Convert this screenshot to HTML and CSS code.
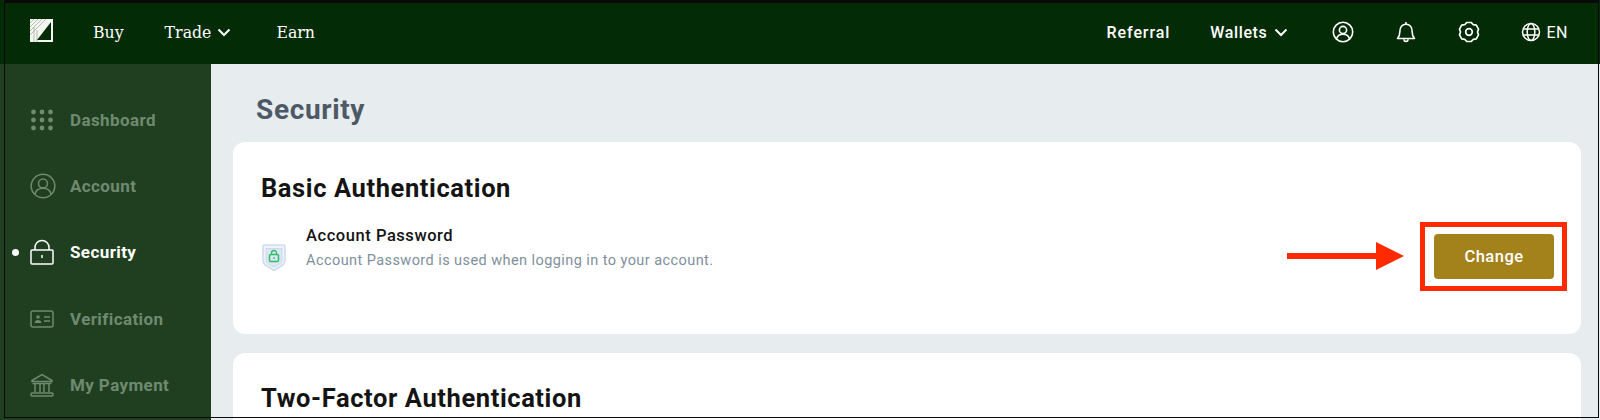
FILE: index.html
```html
<!DOCTYPE html>
<html lang="en">
<head>
<meta charset="utf-8">
<title>Security</title>
<link rel="stylesheet" href="styles.css">
</head>
<body>
<div class="page">
  <header class="topbar">
    <svg class="logo" viewBox="0 0 23 23" width="23" height="23">
      <rect width="23" height="23" fill="#f4f6f2"/>
      <path d="M0 4L4 0M0 8L8 0M0 12L12 0M0 16L16 0M4 23V8M7 23V11" stroke="#9aa79a" stroke-width=".7" fill="none"/>
      <path d="M21 3V21H7Z" fill="#032b05"/>
    </svg>
    <nav class="nav-left">
      <a class="nav-serif nav-buy">Buy</a>
      <a class="nav-serif nav-trade">Trade
        <svg class="chev" viewBox="0 0 14 9" width="14" height="9"><path d="M1.5 1.5L7 7L12.5 1.5" stroke="#fff" stroke-width="2" fill="none"/></svg>
      </a>
      <a class="nav-serif nav-earn">Earn</a>
    </nav>
    <nav class="nav-right">
      <a class="nav-sans nav-ref">Referral</a>
      <a class="nav-sans nav-wal">Wallets
        <svg class="chev" viewBox="0 0 14 9" width="14" height="9"><path d="M1.5 1.5L7 7L12.5 1.5" stroke="#fff" stroke-width="2" fill="none"/></svg>
      </a>
      <svg class="ticon i-user" viewBox="0 0 22 22" width="22" height="22" fill="none" stroke="#fff" stroke-width="1.6"><circle cx="11" cy="11" r="9.7"/><circle cx="11" cy="9" r="3.6"/><path d="M4.5 18c.8-3.2 3.4-4.700 6.500-4.700s5.700 1.500 6.500 4.700"/></svg>
      <svg class="ticon i-bell" viewBox="0 0 22 22" width="22" height="22" fill="none" stroke="#fff" stroke-width="1.6"><path d="M2.500 17.500c1.600-1.800 2.400-3.200 2.400-7 0-4.200 2.200-7.300 6.100-7.300s6.100 3.100 6.100 7.300c0 3.800.8 5.200 2.400 7z" stroke-linejoin="round"/><path d="M11 1v2.200"/><path d="M9 18.300c0 1.300.9 2.200 2 2.200s2-.9 2-2.200"/></svg>
      <svg class="ticon i-gear" viewBox="0 0 22 22" width="22" height="22" fill="none" stroke="#fff" stroke-width="1.7"><path d="M8.700 1.500H13.300L15.300 3.700L18.300 4.200L20.500 8.100L19.500 11L20.500 13.900L18.300 17.800L15.300 18.300L13.300 20.500H8.700L6.700 18.300L3.700 17.800L1.500 13.900L2.500 11L1.500 8.100L3.700 4.200L6.700 3.700Z" stroke-linejoin="round"/><circle cx="11" cy="11" r="3.300"/></svg>
      <span class="lang">
        <svg viewBox="0 0 20 20" width="20" height="20" fill="none" stroke="#fff" stroke-width="1.500"><circle cx="10" cy="10" r="8.500"/><ellipse cx="10" cy="10" rx="3.800" ry="8.500"/><path d="M2 7h16M2 13h16"/></svg>
        <span>EN</span>
      </span>
    </nav>
  </header>
  <div class="body">
    <aside class="sidebar">
      <a class="side-item">
        <svg viewBox="0 0 24 24" width="24" height="24" fill="#6f8a70"><circle cx="3.500" cy="4" r="2.400"/><circle cx="12" cy="4" r="2.400"/><circle cx="20.500" cy="4" r="2.400"/><circle cx="3.500" cy="12" r="2.400"/><circle cx="12" cy="12" r="2.400"/><circle cx="20.500" cy="12" r="2.400"/><circle cx="3.500" cy="20" r="2.400"/><circle cx="12" cy="20" r="2.400"/><circle cx="20.500" cy="20" r="2.400"/></svg>
        <span>Dashboard</span>
      </a>
      <a class="side-item">
        <svg viewBox="0 0 26 26" width="26" height="26" fill="none" stroke="#6f8a70" stroke-width="1.500"><circle cx="13" cy="13" r="11.800"/><circle cx="13" cy="10.500" r="4.500"/><path d="M5 21c1-4 4.200-5.800 8-5.800s7 1.800 8 5.800"/></svg>
        <span>Account</span>
      </a>
      <a class="side-item active">
        <i class="dot"></i>
        <svg viewBox="0 0 24 26" width="24" height="26" fill="none" stroke="#fff" stroke-width="1.500"><rect x="1" y="11" width="22" height="14" rx="1"/><path d="M5 11V8.500a7 7 0 0 1 14 0V11"/><path d="M12 16v3"/></svg>
        <span>Security</span>
      </a>
      <a class="side-item">
        <svg viewBox="0 0 24 18" width="24" height="18" fill="none" stroke="#6f8a70" stroke-width="1.500"><rect x="1" y="1" width="22" height="16" rx="2"/><circle cx="8" cy="7" r="1.800" fill="#6f8a70" stroke="none"/><path d="M4.500 13c.4-2.200 1.700-3 3.500-3s3.100.8 3.500 3z" fill="#6f8a70" stroke="none"/><path d="M14 7h6M14 11h6"/></svg>
        <span>Verification</span>
      </a>
      <a class="side-item">
        <svg viewBox="0 0 24 24" width="24" height="24" fill="none" stroke="#6f8a70" stroke-width="1.500"><path d="M2 7.500L12 1.500L22 7.500V8.500H2Z"/><path d="M5 11V19M10 11V19M14 11V19M19 11V19M2.500 10.500H21.500"/><rect x="1" y="20" width="22" height="3" rx="1"/></svg>
        <span>My Payment</span>
      </a>
    </aside>
    <main class="content">
      <h1>Security</h1>
      <section class="card card-basic">
        <h2>Basic Authentication</h2>
        <div class="row">
          <svg class="shield" viewBox="0 0 26 29" width="26" height="29"><path d="M2 3.500C2 2.500 2.700 2 3.500 2H22.500C23.300 2 24 2.500 24 3.500V18C24 20 23 21 21 22.500L13 27.500L5 22.500C3 21 2 20 2 18Z" fill="#eef3fa" stroke="#cfdcef" stroke-width="1.600"/><path d="M5 5.500H21V17.500C21 19 20 20 19 20.700L13 24.300L7 20.700C6 20 5 19 5 17.500Z" fill="#dde6f2" stroke="#c6d4e8" stroke-width=".8"/><rect x="8.500" y="11.500" width="9" height="7" rx="1.200" fill="none" stroke="#2bbf6a" stroke-width="1.500"/><path d="M10.500 11.500V10a2.500 2.500 0 0 1 5 0v1.500" fill="none" stroke="#2bbf6a" stroke-width="1.300"/><path d="M13 14v2" stroke="#2bbf6a" stroke-width="1.200"/></svg>
          <div class="row-text">
            <div class="row-title">Account Password</div>
            <div class="row-desc">Account Password is used when logging in to your account.</div>
          </div>
          <button class="btn">Change</button>
        </div>
      </section>
      <section class="card card-two">
        <h2>Two-Factor Authentication</h2>
      </section>
    </main>
  </div>
  <div class="callout-box"></div>
  <svg class="callout-arrow" viewBox="0 0 118 28" width="118" height="28"><path d="M0 11H89V0L117 14L89 28V17H0Z" fill="#ff2a00"/></svg>
  <div class="frame"></div>
</div>
</body>
</html>
```
FILE: styles.css
```css
* { box-sizing: border-box; }
html, body { margin: 0; padding: 0; background: #fff; }
.page {
  position: relative;
  width: 1600px;
  height: 420px;
  overflow: hidden;
  font-family: "Roboto", "Liberation Sans", sans-serif;
}
.topbar {
  height: 64px;
  background: #032b05;
  display: flex;
  align-items: center;
  padding: 0 0 0 30px;
  color: #fff;
}
.logo { flex: none; margin-top: -4px; }
.nav-left, .nav-right { display: flex; align-items: center; }
.nav-left { margin-left: 40px; }
.nav-right { margin-left: auto; padding-right: 32px; }
.nav-serif {
  font-family: "DejaVu Serif Condensed", "DejaVu Serif", serif;
  font-size: 17.5px;
  color: #fff;
  display: inline-flex;
  align-items: center;
  gap: 6px;
}
.nav-trade { margin-left: 41px; }
.nav-earn { margin-left: 45px; }
.nav-sans {
  font-size: 16px;
  font-weight: 500;
  letter-spacing: .5px;
  color: #fff;
  display: inline-flex;
  align-items: center;
  gap: 7px;
}
.nav-ref { letter-spacing: .9px; }
.nav-wal { margin-left: 40px; letter-spacing: .65px; }
.ticon { flex: none; }
.i-user { margin-left: 44px; }
.i-bell { margin-left: 41px; }
.i-gear { margin-left: 41px; }
.lang {
  display: inline-flex;
  align-items: center;
  gap: 5px;
  margin-left: 41px;
  font-size: 16px;
  letter-spacing: .5px;
}
.body { display: flex; height: 356px; }
.sidebar {
  width: 211px;
  flex: none;
  background: #1f3f20;
  padding-top: 43px;
  display: flex;
  flex-direction: column;
  gap: 40.2px;
}
.side-item {
  position: relative;
  height: 26px;
  padding-left: 30px;
  display: flex;
  align-items: center;
  color: #6f8a70;
  font-size: 17px;
  font-weight: 700;
  letter-spacing: .4px;
}
.side-item svg { flex: none; }
.side-item span { position: absolute; left: 70px; }
.side-item.active { color: #fff; }
.side-item .dot {
  position: absolute;
  left: 12px;
  top: 10px;
  width: 7px;
  height: 7px;
  border-radius: 50%;
  background: #fff;
}
.content {
  flex: 1;
  background: #e7ecef;
  padding: 0 19px 0 22px;
}
h1 {
  margin: 0;
  padding: 28px 0 0 23px;
  height: 78px;
  font-size: 28px;
  font-weight: 700;
  line-height: 36px;
  letter-spacing: .65px;
  color: #4d5a65;
}
.card {
  background: #fff;
  border-radius: 12px;
  padding: 31px 28px 0;
  margin-bottom: 19px;
}
.card-basic { height: 192px; }
.card-two { height: 120px; padding-top: 30px; }
h2 {
  margin: 0;
  font-size: 25.5px;
  font-weight: 700;
  line-height: 30px;
  letter-spacing: .6px;
  color: #141414;
}
.row {
  display: flex;
  align-items: center;
  margin-top: 31px;
}
.shield { flex: none; position: relative; top: 1px; }
.row-text { margin-left: 19px; align-self: flex-start; margin-top: -8px; }
.row-title {
  font-size: 16.5px;
  font-weight: 500;
  line-height: 20px;
  letter-spacing: .55px;
  color: #141414;
}
.row-desc {
  margin-top: 5px;
  font-size: 14.5px;
  line-height: 20px;
  letter-spacing: .43px;
  color: #7f8f9d;
}
.btn {
  margin-left: auto;
  margin-right: -1px;
  width: 120px;
  height: 45px;
  border: 0;
  border-radius: 4px;
  background: #a3821c;
  color: #fff;
  font-family: inherit;
  font-size: 16.5px;
  font-weight: 500;
  letter-spacing: .5px;
}
.callout-box {
  position: absolute;
  left: 1420px;
  top: 222px;
  width: 147px;
  height: 69px;
  border: 5px solid #ff2a00;
}
.callout-arrow {
  position: absolute;
  left: 1287px;
  top: 242px;
}
.frame {
  position: absolute;
  left: 4px;
  top: 0;
  width: 1595px;
  height: 418px;
  border: 1px solid #0a0a0a;
  border-top-width: 3px;
  pointer-events: none;
}
```
